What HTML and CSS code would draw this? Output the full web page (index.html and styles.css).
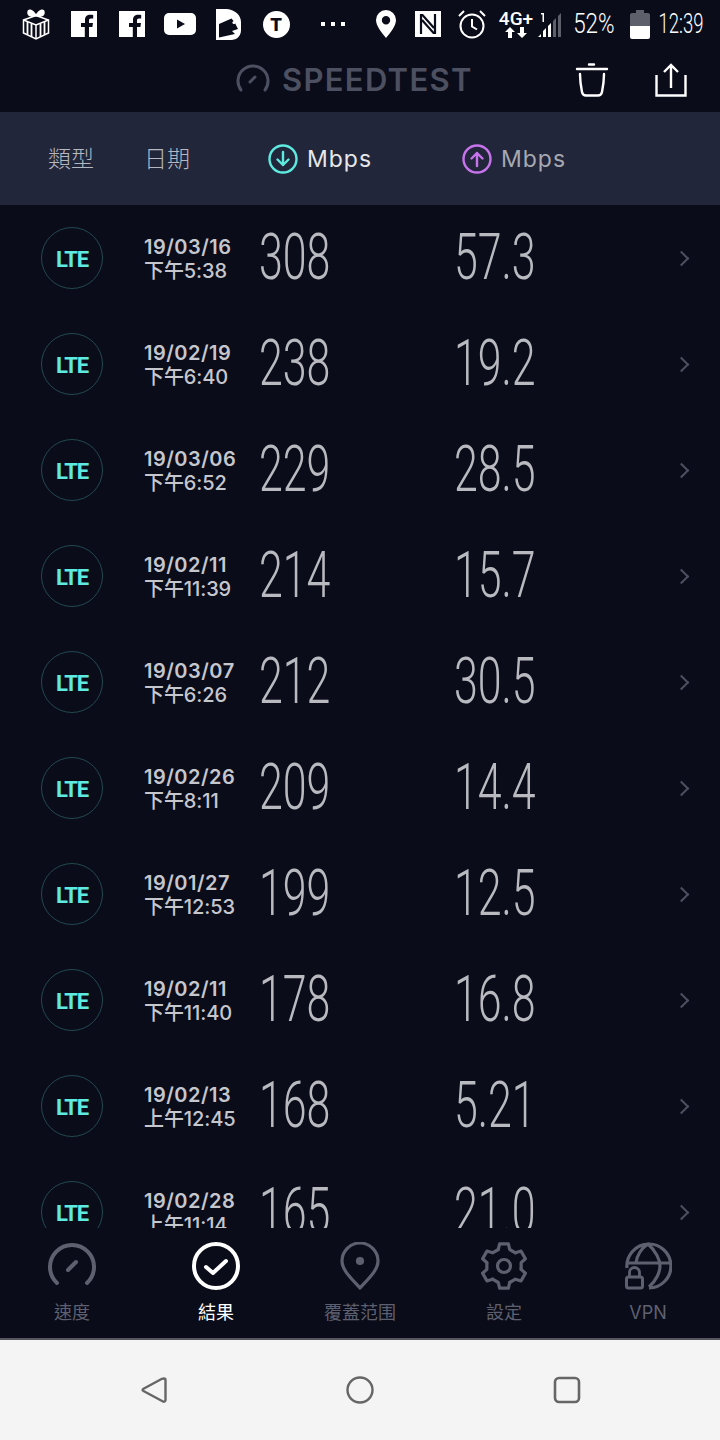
FILE: index.html
```html
<!DOCTYPE html>
<html lang="zh-Hant">
<head>
    <meta charset="UTF-8">
    <meta name="viewport" content="width=device-width, initial-scale=1.0">
    <title>Speedtest 結果</title>
    <link rel="stylesheet" href="styles.css">
</head>
<body>
    <div class="phone">
        <div class="status-bar">
            <span class="slot slot-48">
                <svg width="28" height="32" viewBox="0 0 28 32" fill="none" stroke="#fff" stroke-width="1.500">
                    <path d="M1.500 12L14 7.500 26.500 12v13L14 31 1.500 25z"/>
                    <path d="M1.500 12L14 17l12.500-5M14 17v14"/>
                    <path d="M5.500 14v12.500M9.500 15.500v13.500M18.500 15.500v13.500M22.500 14v12.500" stroke-width="1.800"/>
                    <path d="M14 7.500C10 1 6 1 6 4.500s4 4.500 8 3zM14 7.500c4-6.500 8-6.500 8-3s-4 4.500-8 3z" fill="#fff"/>
                </svg>
            </span>
            <span class="slot slot-48">
                <svg width="26" height="26" viewBox="0 0 26 26"><path fill="#fff" d="M0 0h26v26h-8v-10h3.400l.6-4h-4V9.500c0-1.200.5-2 2-2h2.200V4c-.8-.1-1.800-.2-3-.2-3.200 0-5.200 1.900-5.200 5.200V12H10v4h3.800v10H0z"/></svg>
            </span>
            <span class="slot slot-48">
                <svg width="26" height="26" viewBox="0 0 26 26"><path fill="#fff" d="M0 0h26v26h-8v-10h3.400l.6-4h-4V9.500c0-1.200.5-2 2-2h2.200V4c-.8-.1-1.800-.2-3-.2-3.200 0-5.200 1.900-5.200 5.200V12H10v4h3.800v10H0z"/></svg>
            </span>
            <span class="slot slot-48">
                <svg width="32" height="22" viewBox="0 0 32 22"><path fill="#fff" fill-rule="evenodd" d="M5 0h22a5 5 0 0 1 5 5v12a5 5 0 0 1-5 5H5a5 5 0 0 1-5-5V5a5 5 0 0 1 5-5zM13 6.500v9l8-4.500z"/></svg>
            </span>
            <span class="slot slot-48">
                <svg width="25" height="31" viewBox="0 0 25 31"><path fill="#fff" fill-rule="evenodd" d="M0 0h11c8 1 14 6 14 13v8c0 6-4 10-10 10H0zM3 15v13.500l16-3.500-3-3 6-2-3-6c-1 1-2 .5-2-.5l1-1-2.500-3z"/><circle cx="18" cy="13.500" r="1.600" fill="#fff"/></svg>
            </span>
            <span class="slot slot-48"><span class="t-badge">T</span></span>
            <span class="slot slot-66 dots"><i></i><i></i><i></i></span>
            <span class="slot slot-40">
                <svg width="20" height="28" viewBox="0 0 20 28"><path fill="#fff" fill-rule="evenodd" d="M10 0a10 10 0 0 1 10 10c0 6-6 13-10 18C6 23 0 16 0 10A10 10 0 0 1 10 0zm0 6a4.200 4.200 0 1 0 0 8.400A4.200 4.200 0 0 0 10 6z"/></svg>
            </span>
            <span class="slot slot-44">
                <svg width="26" height="26" viewBox="0 0 26 26">
                    <rect width="26" height="26" fill="#fff"/>
                    <path d="M6 23V4h1.500L19 17M20 3v19h-1.500L7 9" fill="none" stroke="#0a0c1a" stroke-width="2.200"/>
                </svg>
            </span>
            <span class="slot slot-44">
                <svg width="30" height="30" viewBox="0 0 30 30" fill="none" stroke="#fff" stroke-width="2">
                    <circle cx="15" cy="17" r="11.500"/>
                    <path d="M15 10v7.500l5 3M2 7l5-5M28 7l-5-5"/>
                </svg>
            </span>
            <span class="slot slot-44 net">
                <span class="net-label">4G+</span>
                <svg width="22" height="11" viewBox="0 0 22 11"><path fill="#fff" d="M5 0l5 5H7v6H3V5H0zM17 11l5-5h-3V0h-4v6h-3z"/></svg>
            </span>
            <span class="slot slot-24">
                <svg width="24" height="26" viewBox="0 0 24 26">
                    <path fill="#fff" d="M0 26l3-3v3zM5 26v-6l3-3v9zM10 26V15l3-3v14z"/>
                    <path fill="#5d5f6b" d="M15 26V10l3-3v19zM20 26V5l3-3v24z"/>
                    <path fill="#fff" d="M3 2h3v9H4.500V3.500H3z"/>
                </svg>
            </span>
            <span class="slot slot-64"><span class="thin-text percent">52%</span></span>
            <span class="slot slot-28">
                <svg width="20" height="29" viewBox="0 0 20 29">
                    <path fill="#5d5f6b" d="M6 0h8v3h4a2 2 0 0 1 2 2v11H0V5a2 2 0 0 1 2-2h4z"/>
                    <path fill="#fff" d="M0 16h20v11a2 2 0 0 1-2 2H2a2 2 0 0 1-2-2z"/>
                </svg>
            </span>
            <span class="slot slot-54"><span class="thin-text clock">12:39</span></span>
        </div>

        <div class="toolbar">
            <svg class="logo-icon" width="34" height="28" viewBox="0 0 34 28" fill="none" stroke="#4d5060" stroke-width="3" stroke-linecap="round">
                <path d="M5 26A15 15 0 1 1 29 26"/>
                <path d="M14 18l5-5"/>
            </svg>
            <span class="logo-text">SPEEDTEST</span>
            <svg class="trash" width="34" height="34" viewBox="0 0 34 34" fill="none" stroke="#fff" stroke-width="2.400" stroke-linecap="round">
                <path d="M2 6h30M14 1.500h5M5 11c0 6 1 13 2 18 .4 2 2 3.500 4 3.500h12c2 0 3.600-1.500 4-3.500 1-5 2-12 2-18"/>
            </svg>
            <svg class="share" width="32" height="34" viewBox="0 0 32 34" fill="none" stroke="#fff" stroke-width="2.400">
                <path d="M1.500 12v20.500h29V12M16 25V2M9 9l7-7 7 7"/>
            </svg>
        </div>

        <div class="table-head">
            <span class="head-cell">類型</span>
            <span class="head-cell">日期</span>
            <span class="head-speed head-down">
                <svg width="30" height="30" viewBox="0 0 30 30" fill="none" stroke="#5eeadf" stroke-width="2.400" stroke-linecap="round" stroke-linejoin="round">
                    <circle cx="15" cy="15" r="13.500"/>
                    <path d="M15 8v13M9.500 15.500L15 21l5.500-5.500"/>
                </svg>
                Mbps
            </span>
            <span class="head-speed head-up">
                <svg width="30" height="30" viewBox="0 0 30 30" fill="none" stroke="#c774ec" stroke-width="2.400" stroke-linecap="round" stroke-linejoin="round">
                    <circle cx="15" cy="15" r="13.500"/>
                    <path d="M15 22V9M9.500 14.500L15 9l5.500 5.500"/>
                </svg>
                Mbps
            </span>
        </div>

        <div class="result-list">
            <div class="result-row">
                <span class="lte">LTE</span>
                <div class="when"><div>19/03/16</div><div>下午5:38</div></div>
                <span class="num">308</span><span class="num">57.3</span><span class="chevron"></span>
            </div>
            <div class="result-row">
                <span class="lte">LTE</span>
                <div class="when"><div>19/02/19</div><div>下午6:40</div></div>
                <span class="num">238</span><span class="num">19.2</span><span class="chevron"></span>
            </div>
            <div class="result-row">
                <span class="lte">LTE</span>
                <div class="when"><div>19/03/06</div><div>下午6:52</div></div>
                <span class="num">229</span><span class="num">28.5</span><span class="chevron"></span>
            </div>
            <div class="result-row">
                <span class="lte">LTE</span>
                <div class="when"><div>19/02/11</div><div>下午11:39</div></div>
                <span class="num">214</span><span class="num">15.7</span><span class="chevron"></span>
            </div>
            <div class="result-row">
                <span class="lte">LTE</span>
                <div class="when"><div>19/03/07</div><div>下午6:26</div></div>
                <span class="num">212</span><span class="num">30.5</span><span class="chevron"></span>
            </div>
            <div class="result-row">
                <span class="lte">LTE</span>
                <div class="when"><div>19/02/26</div><div>下午8:11</div></div>
                <span class="num">209</span><span class="num">14.4</span><span class="chevron"></span>
            </div>
            <div class="result-row">
                <span class="lte">LTE</span>
                <div class="when"><div>19/01/27</div><div>下午12:53</div></div>
                <span class="num">199</span><span class="num">12.5</span><span class="chevron"></span>
            </div>
            <div class="result-row">
                <span class="lte">LTE</span>
                <div class="when"><div>19/02/11</div><div>下午11:40</div></div>
                <span class="num">178</span><span class="num">16.8</span><span class="chevron"></span>
            </div>
            <div class="result-row">
                <span class="lte">LTE</span>
                <div class="when"><div>19/02/13</div><div>上午12:45</div></div>
                <span class="num">168</span><span class="num">5.21</span><span class="chevron"></span>
            </div>
            <div class="result-row">
                <span class="lte">LTE</span>
                <div class="when"><div>19/02/28</div><div>上午11:14</div></div>
                <span class="num">165</span><span class="num">21.0</span><span class="chevron"></span>
            </div>
        </div>

        <div class="tab-bar">
            <div class="tab">
                <svg width="48" height="48" viewBox="0 0 48 48" fill="none" stroke="#5e6070" stroke-width="4" stroke-linecap="round">
                    <path d="M9 41A22 22 0 1 1 39 41"/>
                    <path d="M20 28l8-8"/>
                </svg>
                <span>速度</span>
            </div>
            <div class="tab tab-active">
                <svg width="48" height="48" viewBox="0 0 48 48" fill="none" stroke="#fff" stroke-width="4" stroke-linecap="round" stroke-linejoin="round">
                    <circle cx="24" cy="24" r="22"/>
                    <path d="M14 25l7 6 13-12"/>
                </svg>
                <span>結果</span>
            </div>
            <div class="tab">
                <svg width="48" height="48" viewBox="0 0 48 48" fill="none" stroke="#5e6070" stroke-width="3.200" stroke-linejoin="round">
                    <path d="M24 46C15 36 6 28 6 19a18 18 0 0 1 36 0c0 9-9 17-18 27z"/>
                    <circle cx="24" cy="19" r="2.500" fill="#5e6070"/>
                </svg>
                <span>覆蓋范围</span>
            </div>
            <div class="tab">
                <svg width="48" height="48" viewBox="0 0 48 48" fill="none" stroke="#5e6070" stroke-width="3.200" stroke-linejoin="round" stroke-linecap="round">
                    <path id="gear-tooth" d="M18.300 7.500L19.600 1.800H28.400L29.700 7.500L35.440 10.810"/>
                    <use href="#gear-tooth" transform="rotate(60 24 24)"/>
                    <use href="#gear-tooth" transform="rotate(120 24 24)"/>
                    <use href="#gear-tooth" transform="rotate(180 24 24)"/>
                    <use href="#gear-tooth" transform="rotate(240 24 24)"/>
                    <use href="#gear-tooth" transform="rotate(300 24 24)"/>
                    <circle cx="24" cy="24" r="6.500"/>
                </svg>
                <span>設定</span>
            </div>
            <div class="tab">
                <svg width="48" height="48" viewBox="0 0 48 48" fill="none" stroke="#5e6070" stroke-width="3.200">
                    <path d="M3 26A22 22 0 1 1 25 46M3 21h43M12 21c1-8 6-15 12-19 8 7 12 16 12 22s-4 15-11 21"/>
                    <path d="M5.500 34v-3.500a5 5 0 0 1 10 0V34" stroke-width="2.800"/>
                    <rect x="2.500" y="35" width="16" height="11" rx="2" stroke-width="3"/>
                </svg>
                <span class="tab-latin">VPN</span>
            </div>
        </div>

        <div class="nav-bar">
            <svg width="26" height="28" viewBox="0 0 26 28" fill="none" stroke="#666" stroke-width="2.400" stroke-linejoin="round">
                <path d="M23 2.500c1 0 1.500.7 1.500 1.500v20c0 1.500-1.500 2-2.500 1.500L2.500 15c-1.200-.6-1.200-1.500 0-2.200L21 2.800c.7-.3 1.300-.3 2-.3z"/>
            </svg>
            <svg width="28" height="28" viewBox="0 0 28 28" fill="none" stroke="#666" stroke-width="2.400"><circle cx="14" cy="14" r="12.500"/></svg>
            <svg width="28" height="28" viewBox="0 0 28 28" fill="none" stroke="#666" stroke-width="2.600"><rect x="2" y="2" width="24" height="24" rx="4"/></svg>
        </div>
    </div>
</body>
</html>
```

FILE: styles.css
```css
* {
    box-sizing: border-box;
}
body {
    margin: 0;
    background-color: #0a0c1a;
    font-family: Inter, "Noto Sans CJK TC", sans-serif;
}
.phone {
    width: 720px;
    height: 1440px;
    display: flex;
    flex-direction: column;
    overflow: hidden;
    background-color: #0a0c1a;
}

/* status bar */
.status-bar {
    height: 48px;
    padding-left: 12px;
    display: flex;
    align-items: center;
    color: white;
}
.slot {
    display: flex;
    justify-content: center;
    align-items: center;
    flex: none;
}
.slot-24 { width: 24px; }
.slot-28 { width: 28px; }
.slot-40 { width: 40px; }
.slot-44 { width: 44px; }
.slot-48 { width: 48px; }
.slot-54 { width: 54px; }
.slot-64 { width: 64px; }
.slot-66 { width: 66px; }
.t-badge {
    width: 27px;
    height: 27px;
    border-radius: 50%;
    background: white;
    color: #0a0c1a;
    font-size: 18px;
    font-weight: 800;
    line-height: 27px;
    text-align: center;
}
.dots {
    gap: 6px;
}
.dots i {
    width: 4px;
    height: 4px;
    background: white;
}
.net {
    flex-direction: column;
}
.net-label {
    font-family: Roboto, sans-serif;
    font-size: 19px;
    font-weight: 500;
    line-height: 16px;
}
.thin-text {
    display: block;
    font-family: Roboto, sans-serif;
    font-weight: 300;
    font-size: 28px;
    line-height: 30px;
    white-space: nowrap;
}
.percent {
    transform: scaleX(0.8);
}
.clock {
    transform: scaleX(0.66);
}

/* title row */
.toolbar {
    height: 64px;
    padding-left: 236px;
    display: flex;
    align-items: center;
}
.logo-icon {
    flex: none;
    margin-bottom: 4px;
}
.logo-text {
    margin-left: 12px;
    color: #4d5060;
    font-size: 31px;
    font-weight: 600;
    letter-spacing: 1.3px;
    line-height: 34px;
}
.trash {
    margin-left: 102px;
    flex: none;
}
.share {
    margin-left: 46px;
    flex: none;
}

/* table */
.table-head {
    height: 93px;
    padding-left: 48px;
    display: grid;
    grid-template-columns: 98px 122px 194px 1fr;
    align-items: center;
    background-color: #22263a;
}
.head-cell {
    color: #b5b7c0;
    font-size: 23px;
    font-weight: 300;
    margin-bottom: 4px;
}
.head-cell + .head-cell {
    margin-left: -2px;
}
.head-speed {
    display: flex;
    align-items: center;
    gap: 9px;
    font-size: 23px;
    font-weight: 400;
    letter-spacing: 1px;
}
.head-down {
    color: #e6e7ea;
}
.head-up {
    color: #a6a8b2;
}
.result-list {
    height: 1023px;
    overflow: hidden;
}
.result-row {
    height: 106px;
    display: grid;
    grid-template-columns: 144px 116px 195px 1fr 44px;
    align-items: center;
}
.lte {
    width: 62px;
    height: 62px;
    justify-self: center;
    border: 1.5px solid #22494f;
    border-radius: 50%;
    color: #5eeadf;
    font-family: Roboto, sans-serif;
    font-size: 22px;
    font-weight: 700;
    line-height: 63px;
    text-align: center;
    letter-spacing: -1.2px;
}
.when {
    padding-top: 2px;
    color: #c6c7cd;
    font-size: 20px;
    font-weight: 600;
    letter-spacing: 0.5px;
    line-height: 24px;
    white-space: nowrap;
}
.when div + div {
    font-weight: 500;
    letter-spacing: -0.1px;
}
.num {
    display: block;
    margin-left: -1px;
    margin-bottom: 2px;
    color: #b9bac0;
    font-family: Roboto, sans-serif;
    font-size: 65px;
    font-weight: 300;
    line-height: 80px;
    transform: scaleX(0.66);
    transform-origin: left center;
    white-space: nowrap;
}
.chevron {
    width: 11px;
    height: 11px;
    border-top: 2px solid #4d5060;
    border-right: 2px solid #4d5060;
    transform: rotate(45deg);
    justify-self: start;
}

/* bottom tabs */
.tab-bar {
    height: 112px;
    padding-top: 14px;
    display: grid;
    grid-template-columns: repeat(5, 144px);
    border-bottom: 2px solid #55565f;
}
.tab {
    display: flex;
    flex-direction: column;
    align-items: center;
    color: #5e6070;
    font-size: 18px;
    line-height: 24px;
    gap: 11px;
}
.tab-active {
    color: white;
}
.nav-bar {
    height: 100px;
    padding-left: 141px;
    display: flex;
    align-items: center;
    gap: 179px;
    background-color: #f4f4f4;
}
```
